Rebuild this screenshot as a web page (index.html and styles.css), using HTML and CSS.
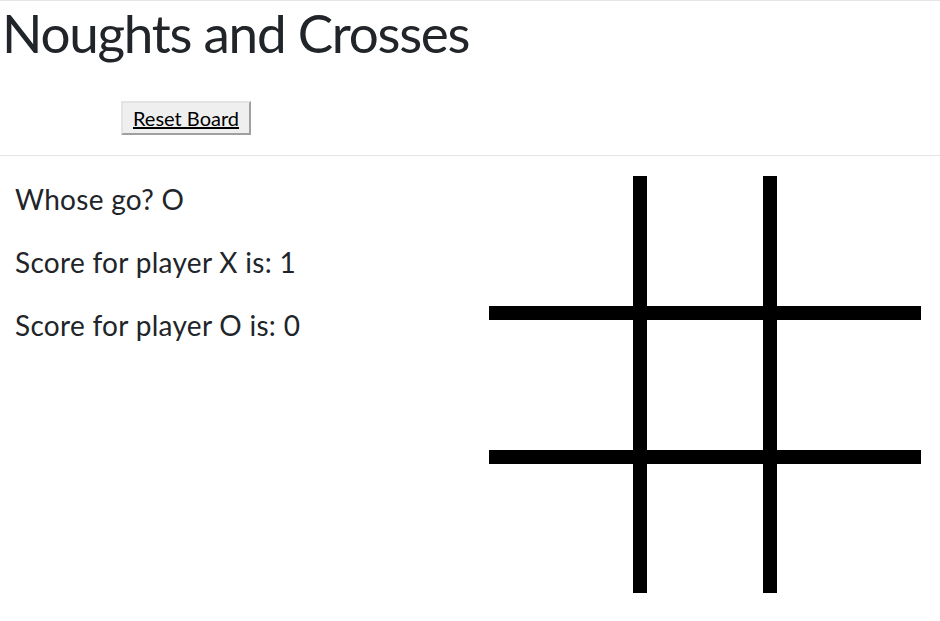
FILE: index.html
```html
<!DOCTYPE html>
<html lang="en">
<head>
<meta charset="utf-8">
<title>Noughts and Crosses</title>
<link rel="stylesheet" href="styles.css">
</head>
<body>
<header class="top">
  <h1 class="title">Noughts and Crosses</h1>
  <div class="controls">
    <button class="reset" type="button">Reset Board</button>
  </div>
</header>
<main class="game">
  <section class="status">
    <p class="line">Whose go? O</p>
    <p class="line">Score for player X is: 1</p>
    <p class="line">Score for player O is: 0</p>
  </section>
  <div class="board">
    <div class="cell"></div><div class="vline v1"></div><div class="cell"></div><div class="vline v2"></div><div class="cell"></div>
    <div class="hline hl1"></div>
    <div class="cell"></div><div class="cell"></div><div class="cell"></div>
    <div class="hline hl2"></div>
    <div class="cell"></div><div class="cell"></div><div class="cell"></div>
  </div>
</main>
</body>
</html>
```
FILE: styles.css
```css
html, body {
  margin: 0;
  padding: 0;
  background: #ffffff;
}
body {
  font-family: "Lato", "Open Sans", sans-serif;
  color: #212529;
}
.top {
  border-top: 1px solid #e5e5e5;
  border-bottom: 1px solid #e5e5e5;
  height: 154px;
}
.title {
  margin: 0;
  padding-left: 2px;
  font-size: 53px;
  font-weight: 400;
  letter-spacing: -1.25px;
  line-height: 64px;
}
.controls {
  padding-left: 121px;
  padding-top: 36px;
}
.reset {
  font-family: "Lato", "Open Sans", sans-serif;
  font-size: 20px;
  color: #000000;
  text-decoration: underline;
  background: #efefef;
  border-style: solid;
  border-width: 2px;
  border-color: #e3e3e3 #a0a0a0 #a0a0a0 #e3e3e3;
  width: 130px;
  height: 34px;
  padding: 0;
  line-height: 28px;
}
.game {
  display: flex;
  justify-content: space-between;
}
.status {
  padding-left: 15px;
  padding-top: 22px;
}
.line {
  margin: 0 0 21px 0;
  font-size: 28px;
  letter-spacing: 0.3px;
  line-height: 42px;
}
.board {
  margin-top: 20px;
  margin-right: 19px;
  display: grid;
  grid-template-columns: 144px 14px 116px 14px 144px;
  grid-template-rows: 130px 14px 130px 14px 129px;
}
.vline {
  background: #000000;
  grid-row: 1 / 6;
}
.v1 { grid-column: 2; }
.v2 { grid-column: 4; }
.hline {
  background: #000000;
  grid-column: 1 / 6;
}
.hl1 { grid-row: 2; }
.hl2 { grid-row: 4; }
```
